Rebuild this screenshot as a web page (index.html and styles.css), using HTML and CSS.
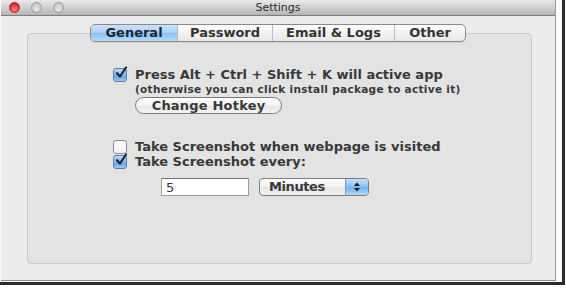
FILE: index.html
```html
<!DOCTYPE html>
<html>
<head>
<meta charset="utf-8">
<link rel="stylesheet" href="styles.css">
</head>
<body>
<div class="frame">
  <div class="window">
    <div class="titlebar">
      <div class="lights">
        <span class="light red"></span>
        <span class="light"></span>
        <span class="light"></span>
      </div>
      <div class="title">Settings</div>
    </div>
    <div class="panel">
      <div class="tabs">
        <div class="tab active">General</div>
        <div class="tab">Password</div>
        <div class="tab">Email &amp; Logs</div>
        <div class="tab">Other</div>
      </div>
      <div class="content">
        <div class="row">
          <span class="check on"><svg viewBox="0 0 14 14" width="14" height="14"><path d="M3 7.2 L6 10.5 L12 1.5" fill="none" stroke="#1c2230" stroke-width="2.2" stroke-linecap="round" stroke-linejoin="round"/></svg></span>
          <span class="label">Press Alt + Ctrl + Shift + K will active app</span>
        </div>
        <div class="note">(otherwise you can click install package to active it)</div>
        <div class="btnrow"><span class="button">Change Hotkey</span></div>
        <div class="row r2">
          <span class="check"></span>
          <span class="label">Take Screenshot when webpage is visited</span>
        </div>
        <div class="row r3">
          <span class="check on"><svg viewBox="0 0 14 14" width="14" height="14"><path d="M3 7.2 L6 10.5 L12 1.5" fill="none" stroke="#1c2230" stroke-width="2.2" stroke-linecap="round" stroke-linejoin="round"/></svg></span>
          <span class="label">Take Screenshot every:</span>
        </div>
        <div class="fields">
          <span class="field">5</span>
          <span class="popup"><span class="ptext">Minutes</span><span class="arrows"><svg viewBox="0 0 8 12" width="8" height="12"><path d="M1 5 L4 1.5 L7 5 Z M1 7 L4 10.5 L7 7 Z" fill="#1a1a1a"/></svg></span></span>
        </div>
      </div>
    </div>
  </div>
</div>
</body>
</html>
```
FILE: styles.css
```css
html, body {
  margin: 0;
  padding: 0;
  background: #ffffff;
}
body {
  font-family: "DejaVu Sans", "Liberation Sans", sans-serif;
  color: #1e1e1e;
}
.frame {
  width: 561px;
  height: 282px;
  padding-left: 1px;
  border-right: 3px solid #2b2b2b;
  border-bottom: 3px solid #2b2b2b;
  background: #fafafa;
}
.window {
  width: 555px;
  height: 281px;
  background: #ececec;
  border-right: 1px solid #9a9a9a;
  border-bottom: 1px solid #8f8f8f;
  box-sizing: border-box;
  display: flex;
  flex-direction: column;
}
.titlebar {
  height: 15px;
  background: linear-gradient(#e9e9e9, #cbcbcb 60%, #b5b5b5);
  border-bottom: 1px solid #7d7d7d;
  display: flex;
  align-items: center;
  position: relative;
  flex: none;
}
.lights {
  display: flex;
  gap: 11px;
  padding-left: 8px;
}
.light {
  width: 11px;
  height: 11px;
  border-radius: 50%;
  box-sizing: border-box;
  border: 1px solid #9a9a9a;
  background: radial-gradient(circle at 50% 70%, #e6e6e6, #bdbdbd);
}
.light.red {
  border-color: #b02020;
  background: radial-gradient(circle at 50% 70%, #ff8a8a, #e22424 70%);
}
.title {
  position: absolute;
  left: 0;
  right: 0;
  top: 0;
  text-align: center;
  font-size: 11px;
  line-height: 15px;
  color: #2a2a2a;
}
.panel {
  margin: 17px 0 0 26px;
  width: 505px;
  height: 231px;
  box-sizing: border-box;
  border: 1px solid #c8c8c8;
  border-radius: 4px;
  background: #e3e3e3;
  display: flex;
  flex-direction: column;
}
.tabs {
  align-self: center;
  margin-top: -10px;
  margin-left: -3px;
  display: flex;
  height: 16px;
  border: 1px solid #8a8a8a;
  border-radius: 5px;
  background: linear-gradient(#fdfdfd, #f2f2f2 50%, #e8e8e8);
  overflow: hidden;
  box-shadow: 0 1px 0 rgba(0,0,0,0.08);
}
.tab {
  font-size: 13px;
  font-weight: bold;
  line-height: 16px;
  color: #333;
  text-align: center;
  border-left: 1px solid #bcbcbc;
}
.tab:first-child { border-left: none; }
.tab:nth-child(1) { width: 86px; }
.tab:nth-child(2) { width: 94px; }
.tab:nth-child(3) { width: 121px; }
.tab:nth-child(4) { width: 70px; }
.tab.active {
  background: linear-gradient(#c9e2fb, #a9cff5 50%, #8dbff0 51%, #b3dafc);
  color: #1a2535;
}
.content {
  padding: 25px 0 0 85px;
  display: flex;
  flex-direction: column;
}
.row {
  display: flex;
  align-items: center;
  height: 16px;
}
.check {
  width: 14px;
  height: 14px;
  box-sizing: border-box;
  border: 1px solid #8d8d8d;
  border-radius: 3px;
  background: linear-gradient(#ffffff, #f0f0f0);
  margin-right: 8px;
  flex: none;
  position: relative;
}
.check.on {
  border-color: #5a7fb0;
  background: linear-gradient(#bcd9f7, #7fb2ea 55%, #5f9ee4 56%, #9cc9f5);
}
.check svg {
  position: absolute;
  left: 0;
  top: -3px;
}
.label {
  font-size: 13px;
  font-weight: bold;
  line-height: 16px;
  white-space: nowrap;
  color: #383838;
}
.note {
  font-size: 10.5px;
  font-weight: bold;
  letter-spacing: 0.3px;
  line-height: 12px;
  padding-left: 22px;
  white-space: nowrap;
  color: #383838;
}
.btnrow {
  padding-left: 22px;
  margin-top: 2px;
  display: flex;
}
.button {
  width: 147px;
  height: 17px;
  box-sizing: border-box;
  border: 1px solid #7a7a7a;
  border-radius: 9px;
  background: linear-gradient(#ffffff, #f3f3f3 50%, #e6e6e6 51%, #f4f4f4);
  font-size: 13px;
  font-weight: bold;
  letter-spacing: 0.2px;
  line-height: 15px;
  text-align: center;
  color: #383838;
}
.r2 { margin-top: 25px; }
.r3 { margin-top: -1px; }
.fields {
  display: flex;
  gap: 10px;
  margin-top: 8px;
  padding-left: 48px;
}
.field {
  width: 88px;
  height: 18px;
  box-sizing: border-box;
  border: 1px solid #9d9d9d;
  border-top-color: #777;
  background: #ffffff;
  font-size: 13px;
  line-height: 17px;
  padding-left: 4px;
  color: #383838;
}
.popup {
  width: 110px;
  height: 18px;
  box-sizing: border-box;
  border: 1px solid #7d7d7d;
  border-radius: 4px;
  background: linear-gradient(#ffffff, #f1f1f1 50%, #e5e5e5 51%, #f3f3f3);
  display: flex;
  overflow: hidden;
}
.ptext {
  flex: 1;
  font-size: 13px;
  font-weight: bold;
  letter-spacing: -0.4px;
  line-height: 16px;
  padding-left: 9px;
  color: #383838;
}
.arrows {
  width: 22px;
  border-left: 1px solid #7d9cc5;
  background: linear-gradient(#c4dffa, #8ebff0 50%, #75b0ed 51%, #b2d7fb);
  display: flex;
  align-items: center;
  justify-content: center;
}
```
